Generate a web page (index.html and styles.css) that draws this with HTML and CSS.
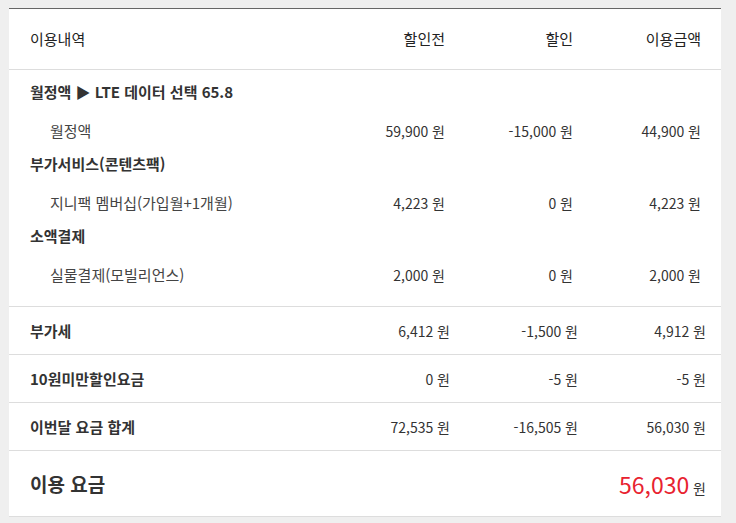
FILE: index.html
```html
<!DOCTYPE html>
<html lang="ko">
<head>
<meta charset="utf-8">
<link rel="stylesheet" href="styles.css">
</head>
<body>
<div class="panel">
  <div class="row head">
    <div class="lbl">이용내역</div>
    <div class="num">할인전</div>
    <div class="num">할인</div>
    <div class="num">이용금액</div>
  </div>
  <div class="section">
    <div class="group">월정액 ▶ LTE 데이터 선택 65.8</div>
    <div class="row sub">
      <div class="lbl">월정액</div>
      <div class="num">59,900 원</div>
      <div class="num">-15,000 원</div>
      <div class="num">44,900 원</div>
    </div>
    <div class="group">부가서비스(콘텐츠팩)</div>
    <div class="row sub">
      <div class="lbl">지니팩 멤버십(가입월+1개월)</div>
      <div class="num">4,223 원</div>
      <div class="num">0 원</div>
      <div class="num">4,223 원</div>
    </div>
    <div class="group">소액결제</div>
    <div class="row sub">
      <div class="lbl">실물결제(모빌리언스)</div>
      <div class="num">2,000 원</div>
      <div class="num">0 원</div>
      <div class="num">2,000 원</div>
    </div>
  </div>
  <div class="row line">
    <div class="lbl b">부가세</div>
    <div class="num">6,412 원</div>
    <div class="num">-1,500 원</div>
    <div class="num">4,912 원</div>
  </div>
  <div class="row line">
    <div class="lbl b">10원미만할인요금</div>
    <div class="num">0 원</div>
    <div class="num">-5 원</div>
    <div class="num">-5 원</div>
  </div>
  <div class="row line">
    <div class="lbl b">이번달 요금 합계</div>
    <div class="num">72,535 원</div>
    <div class="num">-16,505 원</div>
    <div class="num">56,030 원</div>
  </div>
  <div class="total">
    <div class="total-lbl">이용 요금</div>
    <div class="total-val"><span class="red">56,030</span> 원</div>
  </div>
</div>
</body>
</html>
```
FILE: styles.css
```css
html, body {
  margin: 0;
  padding: 0;
}
body {
  background: #efefef;
  font-family: "Noto Sans CJK KR", "Noto Sans", sans-serif;
  font-size: 14px;
  color: #333;
  padding-top: 8px;
}
.panel {
  margin-left: 9px;
  width: 712px;
  background: #fff;
  border-top: 1px solid #666;
  border-bottom: 1px solid #ddd;
}
.row {
  display: grid;
  grid-template-columns: 1fr 128px 128px 128px;
  align-items: center;
  line-height: 20px;
}
.lbl {
  font-size: 15px;
}
.num {
  text-align: right;
  white-space: nowrap;
}
.head {
  height: 60px;
  padding: 0 20px 0 21px;
  border-bottom: 1px solid #ddd;
  color: #222;
}
.head .num {
  font-size: 15px;
}
.section {
  padding: 12px 20px 8px 21px;
  border-bottom: 1px solid #ddd;
}
.group {
  font-size: 15px;
  font-weight: 700;
  line-height: 20px;
}
.sub {
  padding: 19px 0 13px 0;
}
.sub .lbl {
  padding-left: 20px;
  color: #444;
}
.line {
  height: 47px;
  padding: 0 15px 0 21px;
  border-bottom: 1px solid #ddd;
}
.b {
  font-weight: 700;
}
.total {
  height: 65px;
  padding: 0 15px 0 21px;
  display: flex;
  align-items: center;
  justify-content: space-between;
}
.total-lbl {
  font-size: 19px;
  font-weight: 700;
}
.total-val {
  font-size: 14px;
}
.red {
  color: #e8222f;
  font-size: 23px;
}
```
